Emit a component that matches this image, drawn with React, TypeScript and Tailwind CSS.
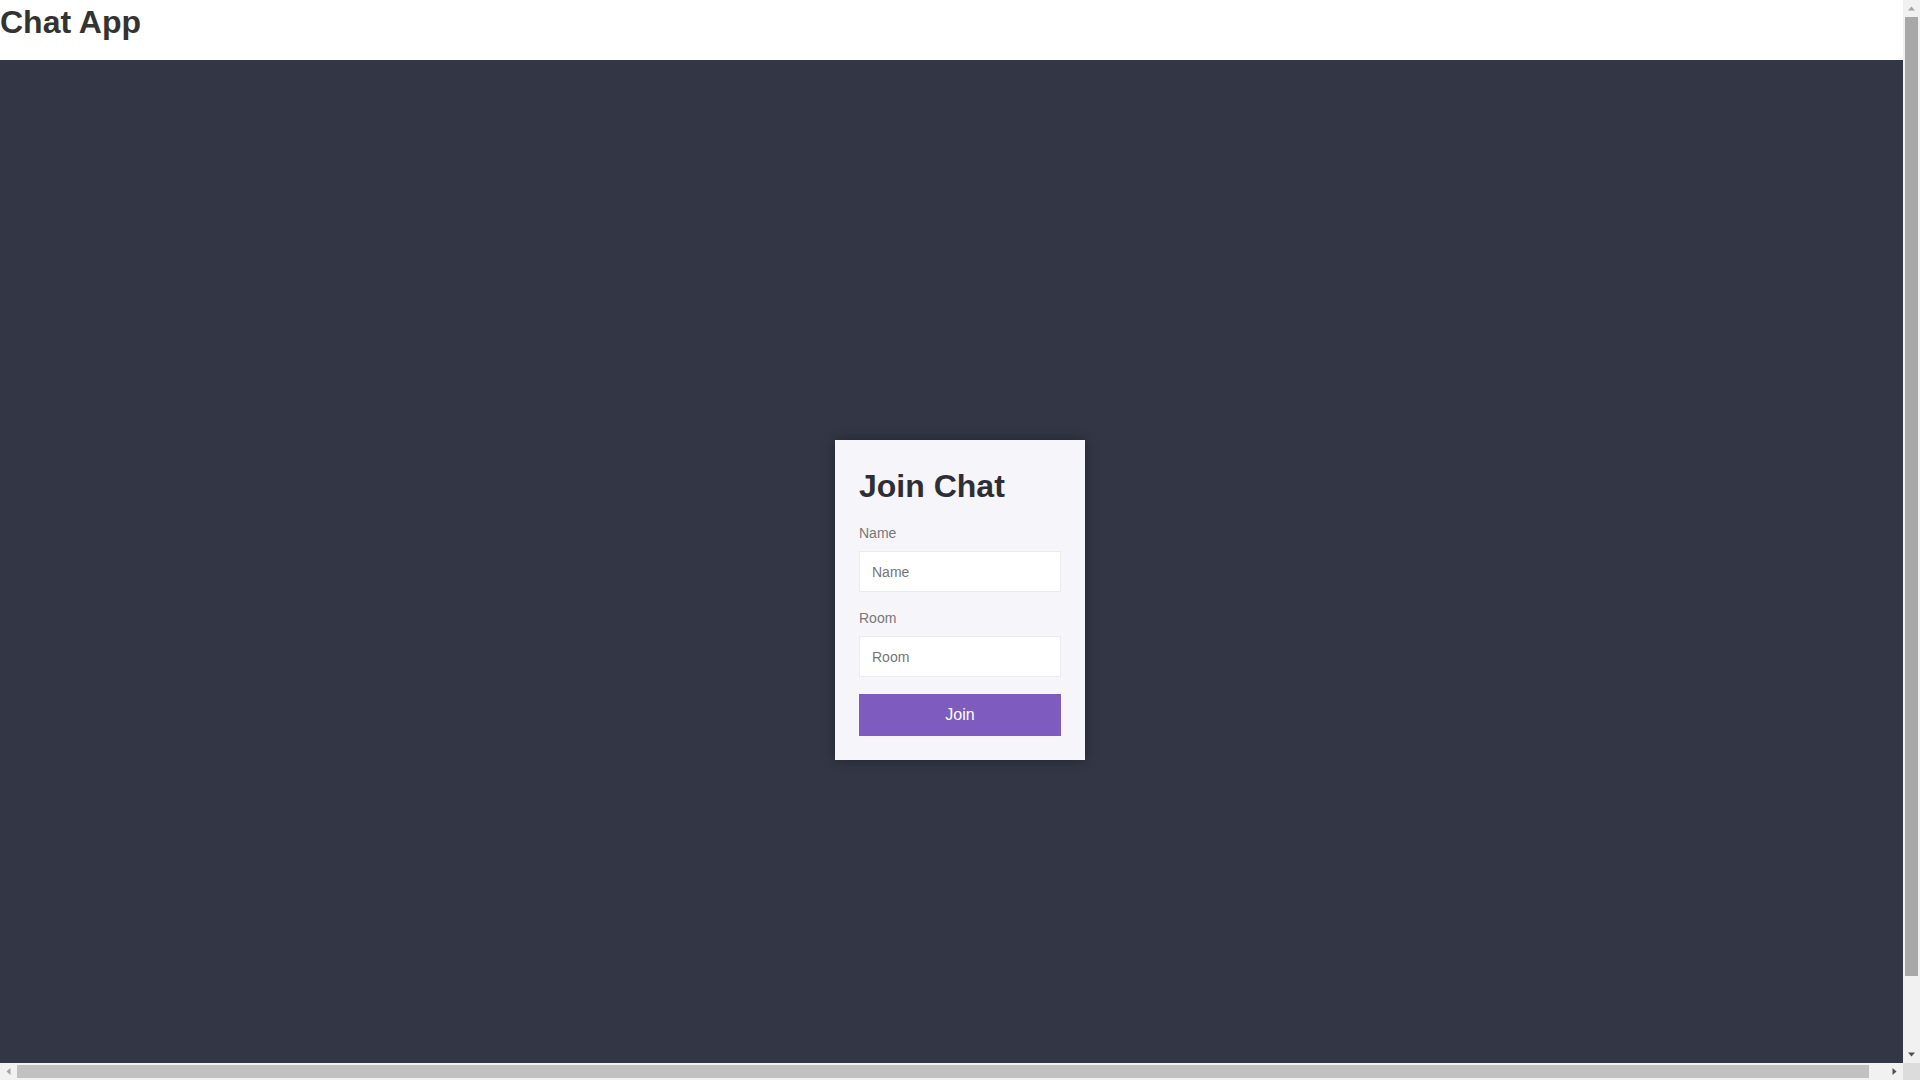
function Arrow({ dir, color }: { dir: "up" | "down" | "left" | "right"; color: string }) {
  const points = {
    up: "5,10.5 12,10.5 8.5,6.5",
    down: "5,6.5 12,6.5 8.5,10.5",
    left: "10.5,5 10.5,12 6.5,8.5",
    right: "6.5,5 6.5,12 10.5,8.5",
  }[dir];
  return (
    <svg width="17" height="17" viewBox="0 0 17 17" className="block shrink-0">
      <polygon points={points} fill={color} />
    </svg>
  );
}

function JoinForm() {
  return (
    <div className="w-[250px] bg-[#f6f5fa] p-6 shadow-[0_0_12px_rgba(0,0,0,0.35)]">
      <h2 className="mb-5 pt-[3px] text-[32px] font-bold leading-[38px] text-[#2e2f36]">Join Chat</h2>

      <form onSubmit={(e) => e.preventDefault()}>
        <div className="mb-[18px]">
          <label htmlFor="name" className="mb-[10px] block text-sm leading-4 text-[#777]">
            Name
          </label>
          <input
            id="name"
            type="text"
            placeholder="Name"
            className="block h-[41px] w-full border border-[#ebebeb] bg-white px-3 text-sm text-[#333] placeholder:text-[#757575] focus:outline-none"
          />
        </div>

        <div className="mb-[17px]">
          <label htmlFor="room" className="mb-[10px] block text-sm leading-4 text-[#777]">
            Room
          </label>
          <input
            id="room"
            type="text"
            placeholder="Room"
            className="block h-[41px] w-full border border-[#ebebeb] bg-white px-3 text-sm text-[#333] placeholder:text-[#757575] focus:outline-none"
          />
        </div>

        <button type="submit" className="block h-[42px] w-full bg-[#7e5bbe] text-base text-white">
          Join
        </button>
      </form>
    </div>
  );
}

export default function App() {
  return (
    <div className="flex h-screen w-screen flex-col overflow-hidden font-['Liberation_Sans',Arial,sans-serif] text-[#333]">
      <div className="flex min-h-0 flex-1">
        {/* page content (viewport) */}
        <div className="min-w-0 flex-1 overflow-hidden">
          <header className="h-[60px] w-[1920px] bg-white">
            <h1 className="m-0 text-[32px] font-bold leading-[44px] text-[#333]">Chat App</h1>
          </header>
          <main className="flex h-[1080px] w-[1920px] items-center justify-center bg-[#333745]">
            <JoinForm />
          </main>
        </div>

        {/* vertical scrollbar */}
        <div className="flex w-[17px] shrink-0 flex-col bg-[#f1f1f1]">
          <Arrow dir="up" color="#a3a3a3" />
          <div className="h-[959px] px-[2px]">
            <div className="h-full bg-[#a8a8a8]" />
          </div>
          <div className="flex-1" />
          <Arrow dir="down" color="#505050" />
        </div>
      </div>

      {/* horizontal scrollbar */}
      <div className="flex h-[17px] shrink-0 bg-[#f1f1f1]">
        <Arrow dir="left" color="#a3a3a3" />
        <div className="w-[1852px] py-[2px]">
          <div className="h-full bg-[#c1c1c1]" />
        </div>
        <div className="flex-1" />
        <Arrow dir="right" color="#505050" />
        <div className="w-[17px] bg-[#dcdcdc]" />
      </div>
    </div>
  );
}
